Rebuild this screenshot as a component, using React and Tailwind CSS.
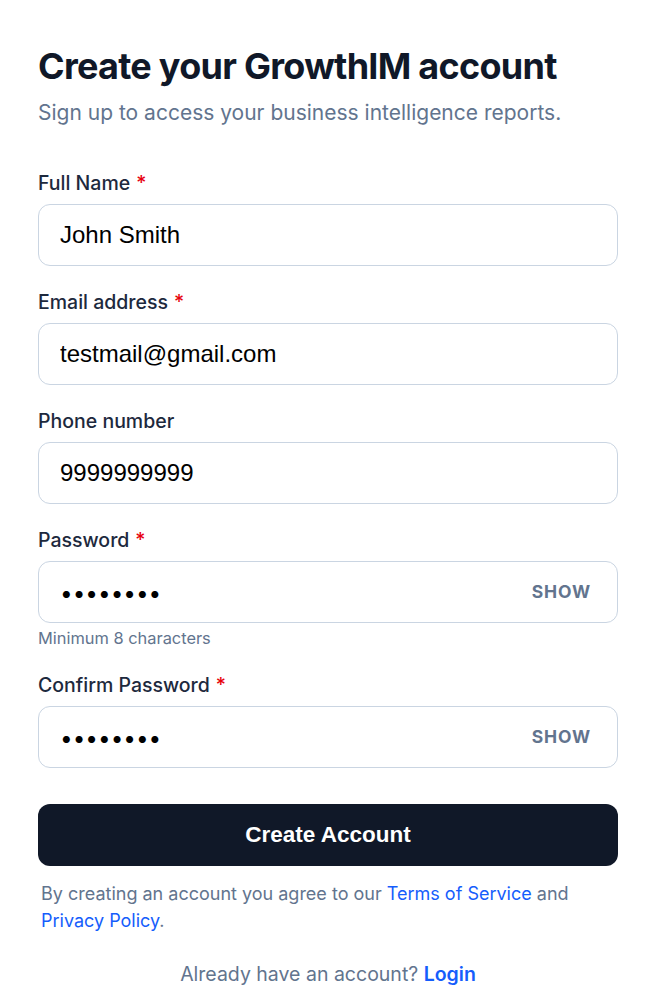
import React, { useState } from 'react';

const Label = ({ children, required }) => (
    <label className="block text-[19.5px] font-medium text-slate-800 leading-7 mb-[7px]">
        {children}
        {required && <span className="text-red-600 ml-[6px]">*</span>}
    </label>
);

const inputClass =
    "w-full h-[62px] px-[21px] bg-white border border-slate-300 rounded-xl text-2xl text-black font-['Liberation_Sans',Arial,sans-serif] outline-none";

const PasswordField = ({ value, onChange }) => {
    const [visible, setVisible] = useState(false);
    return (
        <div className="relative">
            <input
                type={visible ? 'text' : 'password'}
                value={value}
                onChange={onChange}
                className="w-full h-[62px] pl-[21px] pr-24 bg-white border border-slate-300 rounded-xl text-[22.5px] text-black font-['Inter',sans-serif] outline-none"
            />
            <button
                type="button"
                onClick={() => setVisible(!visible)}
                className="absolute right-[27px] top-1/2 -translate-y-1/2 text-[17.5px] font-bold tracking-wider text-slate-500 font-['Inter',sans-serif]"
            >
                {visible ? 'HIDE' : 'SHOW'}
            </button>
        </div>
    );
};

const App = () => {
    const [name, setName] = useState('John Smith');
    const [email, setEmail] = useState('testmail@gmail.com');
    const [phone, setPhone] = useState('9999999999');
    const [password, setPassword] = useState('password');
    const [confirm, setConfirm] = useState('password');

    return (
        <div className="min-h-screen bg-white font-['Inter',sans-serif]">
            <div className="w-[580px] ml-[38px] pt-[42px]">
                <h1 className="text-[36px] leading-[48px] font-bold tracking-[-0.02em] text-gray-900">
                    Create your GrowthIM account
                </h1>
                <p className="mt-[9px] text-[21px] leading-7 text-slate-500">
                    Sign up to access your business intelligence reports.
                </p>

                <form className="mt-[42px]" onSubmit={(e) => e.preventDefault()}>
                    <div className="mb-[22px]">
                        <Label required>Full Name</Label>
                        <input value={name} onChange={(e) => setName(e.target.value)} className={inputClass} />
                    </div>
                    <div className="mb-[22px]">
                        <Label required>Email address</Label>
                        <input value={email} onChange={(e) => setEmail(e.target.value)} className={inputClass} />
                    </div>
                    <div className="mb-[22px]">
                        <Label>Phone number</Label>
                        <input value={phone} onChange={(e) => setPhone(e.target.value)} className={inputClass} />
                    </div>
                    <div className="mb-[22px]">
                        <Label required>Password</Label>
                        <PasswordField value={password} onChange={(e) => setPassword(e.target.value)} />
                        <p className="mt-[5px] text-[16.4px] leading-[21px] text-slate-500">Minimum 8 characters</p>
                    </div>
                    <div className="mb-[36px]">
                        <Label required>Confirm Password</Label>
                        <PasswordField value={confirm} onChange={(e) => setConfirm(e.target.value)} />
                    </div>

                    <button
                        type="submit"
                        className="w-full h-[62px] rounded-xl bg-gray-900 text-white text-[22.5px] font-bold font-['Liberation_Sans',Arial,sans-serif]"
                    >
                        Create Account
                    </button>

                    <p className="mt-[14px] pl-[3px] text-lg leading-[27px] text-slate-500">
                        By creating an account you agree to our{' '}
                        <a href="#" className="text-blue-600">Terms of Service</a> and{' '}
                        <a href="#" className="text-blue-600">Privacy Policy</a>.
                    </p>

                    <p className="mt-[26px] text-center text-[19.5px] leading-7 text-slate-500">
                        Already have an account?{' '}
                        <a href="#" className="text-blue-600 font-semibold">Login</a>
                    </p>
                </form>
            </div>
        </div>
    );
};

export default App;
